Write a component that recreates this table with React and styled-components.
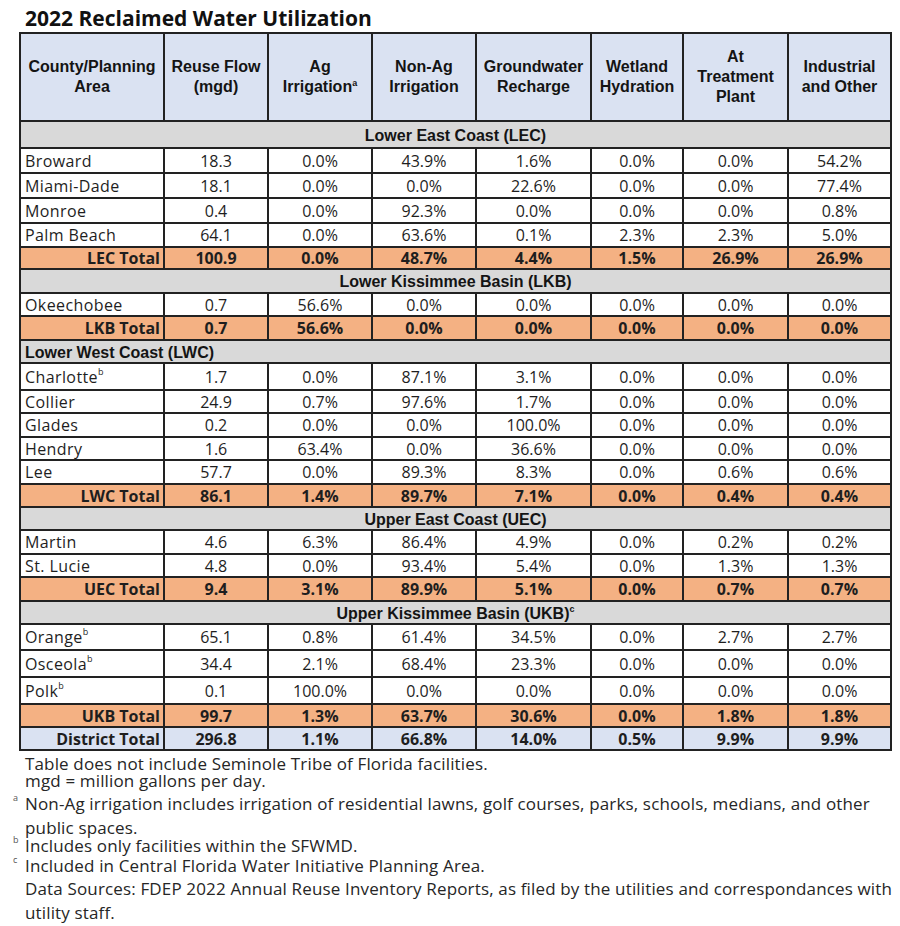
import React from 'react';
import styled, { createGlobalStyle } from 'styled-components';

const GlobalStyle = createGlobalStyle`
  body {
    margin: 0;
    background: #fff;
  }
`;

const Page = styled.div`
  width: 900px;
  padding-top: 4px;
  font-family: "Open Sans", "Liberation Sans", sans-serif;
  color: #1e1e1e;
`;

const Title = styled.h1`
  margin: 0 0 0 25px;
  font-size: 21px;
  line-height: 28px;
  font-weight: 700;
  color: #111;
`;

const Table = styled.table`
  margin-left: 19px;
  width: 871px;
  table-layout: fixed;
  border-collapse: collapse;
  border: 2px solid #222;
`;

const HeadCell = styled.th`
  padding: 0 2px;
  background: #dae2f2;
  border: 2px solid #222;
  font-family: "Liberation Sans", Arial, sans-serif;
  font-size: 16px;
  line-height: 20px;
  font-weight: 700;
  color: #141414;
  text-align: center;
  vertical-align: middle;
  sup {
    font-size: 9px;
    line-height: 0;
    vertical-align: 6px;
  }
`;

const Row = styled.tr`
  height: ${(p) => p.$h}px;
`;

const Band = styled.td`
  padding: 2px 4px 0;
  background: #d9d9d9;
  border: 2px solid #222;
  font-family: "Liberation Sans", Arial, sans-serif;
  font-size: 16px;
  font-weight: 700;
  color: #141414;
  text-align: ${(p) => p.$align || 'center'};
  sup {
    font-size: 9px;
    line-height: 0;
    vertical-align: 7px;
  }
`;

const fills = {
  data: '#fff',
  total: '#f4b183',
  district: '#dae2f2',
};

const Cell = styled.td`
  padding: 0 4px;
  background: ${(p) => fills[p.$kind]};
  border: 2px solid #222;
  font-size: 16px;
  line-height: 20px;
  font-weight: ${(p) => (p.$kind === 'data' ? 400 : 700)};
  color: #1e1e1e;
  text-align: center;
  white-space: nowrap;
`;

const NameCell = styled(Cell)`
  padding: 0 3px 0 4px;
  letter-spacing: ${(p) => (p.$kind === 'data' ? 0.4 : 0)}px;
  text-align: ${(p) => (p.$kind === 'data' ? 'left' : 'right')};
  sup {
    font-size: 9px;
    line-height: 0;
    vertical-align: 8px;
  }
`;

const Notes = styled.div`
  margin-top: 4px;
  padding-left: 25px;
  font-size: 17px;
  letter-spacing: 0.15px;
  color: #262626;
`;

const Note = styled.p`
  margin: ${(p) => p.$mt || 0}px 0 0;
  line-height: ${(p) => p.$lh || 20}px;
`;

const Marker = styled.span`
  display: inline-block;
  width: 12px;
  margin-left: -12px;
  font-size: 9px;
  line-height: 0;
  vertical-align: 9px;
  color: #555;
`;

const columns = [144, 104, 104, 104, 115, 92, 105, 103];

const sections = [
  {
    band: 'Lower East Coast (LEC)',
    bandH: 27,
    rows: [
      ['Broward', '', 25, '18.3', '0.0%', '43.9%', '1.6%', '0.0%', '0.0%', '54.2%'],
      ['Miami-Dade', '', 25, '18.1', '0.0%', '0.0%', '22.6%', '0.0%', '0.0%', '77.4%'],
      ['Monroe', '', 25, '0.4', '0.0%', '92.3%', '0.0%', '0.0%', '0.0%', '0.8%'],
      ['Palm Beach', '', 24, '64.1', '0.0%', '63.6%', '0.1%', '2.3%', '2.3%', '5.0%'],
    ],
    total: ['LEC Total', 22, '100.9', '0.0%', '48.7%', '4.4%', '1.5%', '26.9%', '26.9%'],
  },
  {
    band: 'Lower Kissimmee Basin (LKB)',
    bandH: 24,
    rows: [['Okeechobee', '', 23, '0.7', '56.6%', '0.0%', '0.0%', '0.0%', '0.0%', '0.0%']],
    total: ['LKB Total', 24, '0.7', '56.6%', '0.0%', '0.0%', '0.0%', '0.0%', '0.0%'],
  },
  {
    band: 'Lower West Coast (LWC)',
    align: 'left',
    bandH: 23,
    rows: [
      ['Charlotte', 'b', 27, '1.7', '0.0%', '87.1%', '3.1%', '0.0%', '0.0%', '0.0%'],
      ['Collier', '', 23, '24.9', '0.7%', '97.6%', '1.7%', '0.0%', '0.0%', '0.0%'],
      ['Glades', '', 24, '0.2', '0.0%', '0.0%', '100.0%', '0.0%', '0.0%', '0.0%'],
      ['Hendry', '', 23, '1.6', '63.4%', '0.0%', '36.6%', '0.0%', '0.0%', '0.0%'],
      ['Lee', '', 24, '57.7', '0.0%', '89.3%', '8.3%', '0.0%', '0.6%', '0.6%'],
    ],
    total: ['LWC Total', 23, '86.1', '1.4%', '89.7%', '7.1%', '0.0%', '0.4%', '0.4%'],
  },
  {
    band: 'Upper East Coast (UEC)',
    bandH: 23,
    rows: [
      ['Martin', '', 24, '4.6', '6.3%', '86.4%', '4.9%', '0.0%', '0.2%', '0.2%'],
      ['St. Lucie', '', 23, '4.8', '0.0%', '93.4%', '5.4%', '0.0%', '1.3%', '1.3%'],
    ],
    total: ['UEC Total', 24, '9.4', '3.1%', '89.9%', '5.1%', '0.0%', '0.7%', '0.7%'],
  },
  {
    band: 'Upper Kissimmee Basin (UKB)',
    bandSup: 'c',
    bandH: 23,
    rows: [
      ['Orange', 'b', 26, '65.1', '0.8%', '61.4%', '34.5%', '0.0%', '2.7%', '2.7%'],
      ['Osceola', 'b', 27, '34.4', '2.1%', '68.4%', '23.3%', '0.0%', '0.0%', '0.0%'],
      ['Polk', 'b', 27, '0.1', '100.0%', '0.0%', '0.0%', '0.0%', '0.0%', '0.0%'],
    ],
    total: ['UKB Total', 23, '99.7', '1.3%', '63.7%', '30.6%', '0.0%', '1.8%', '1.8%'],
  },
];

const district = ['District Total', 23, '296.8', '1.1%', '66.8%', '14.0%', '0.5%', '9.9%', '9.9%'];

const TotalRow = ({ row, kind }) => {
  const [label, h, ...values] = row;
  return (
    <Row $h={h}>
      <NameCell $kind={kind}>{label}</NameCell>
      {values.map((v, i) => (
        <Cell key={i} $kind={kind}>{v}</Cell>
      ))}
    </Row>
  );
};

const App = () => {
  return (
    <Page>
      <GlobalStyle />
      <Title>2022 Reclaimed Water Utilization</Title>
      <Table>
        <colgroup>
          {columns.map((w, i) => (
            <col key={i} style={{ width: w }} />
          ))}
        </colgroup>
        <thead>
          <Row $h={88}>
            <HeadCell>County/Planning<br />Area</HeadCell>
            <HeadCell>Reuse Flow<br />(mgd)</HeadCell>
            <HeadCell>Ag<br />Irrigation<sup>a</sup></HeadCell>
            <HeadCell>Non-Ag<br />Irrigation</HeadCell>
            <HeadCell>Groundwater<br />Recharge</HeadCell>
            <HeadCell>Wetland<br />Hydration</HeadCell>
            <HeadCell>At<br />Treatment<br />Plant</HeadCell>
            <HeadCell>Industrial<br />and Other</HeadCell>
          </Row>
        </thead>
        <tbody>
          {sections.map((s) => (
            <React.Fragment key={s.band}>
              <Row $h={s.bandH}>
                <Band colSpan={8} $align={s.align}>
                  {s.band}
                  {s.bandSup && <sup>{s.bandSup}</sup>}
                </Band>
              </Row>
              {s.rows.map(([name, sup, h, ...values]) => (
                <Row key={name} $h={h}>
                  <NameCell $kind="data">
                    {name}
                    {sup && <sup>{sup}</sup>}
                  </NameCell>
                  {values.map((v, i) => (
                    <Cell key={i} $kind="data">{v}</Cell>
                  ))}
                </Row>
              ))}
              <TotalRow row={s.total} kind="total" />
            </React.Fragment>
          ))}
          <TotalRow row={district} kind="district" />
        </tbody>
      </Table>
      <Notes>
        <Note $lh={17}>Table does not include Seminole Tribe of Florida facilities.</Note>
        <Note $lh={17}>mgd = million gallons per day.</Note>
        <Note $mt={3} $lh={24}>
          <Marker>a</Marker>Non-Ag irrigation includes irrigation of residential lawns, golf courses, parks, schools, medians, and other public spaces.
        </Note>
        <Note $mt={-2} $lh={16}>
          <Marker>b</Marker>Includes only facilities within the SFWMD.
        </Note>
        <Note $mt={2}>
          <Marker>c</Marker>Included in Central Florida Water Initiative Planning Area.
        </Note>
        <Note $mt={1} $lh={24}>
          Data Sources: FDEP 2022 Annual Reuse Inventory Reports, as filed by the utilities and correspondances with utility staff.
        </Note>
      </Notes>
    </Page>
  );
};

export default App;
